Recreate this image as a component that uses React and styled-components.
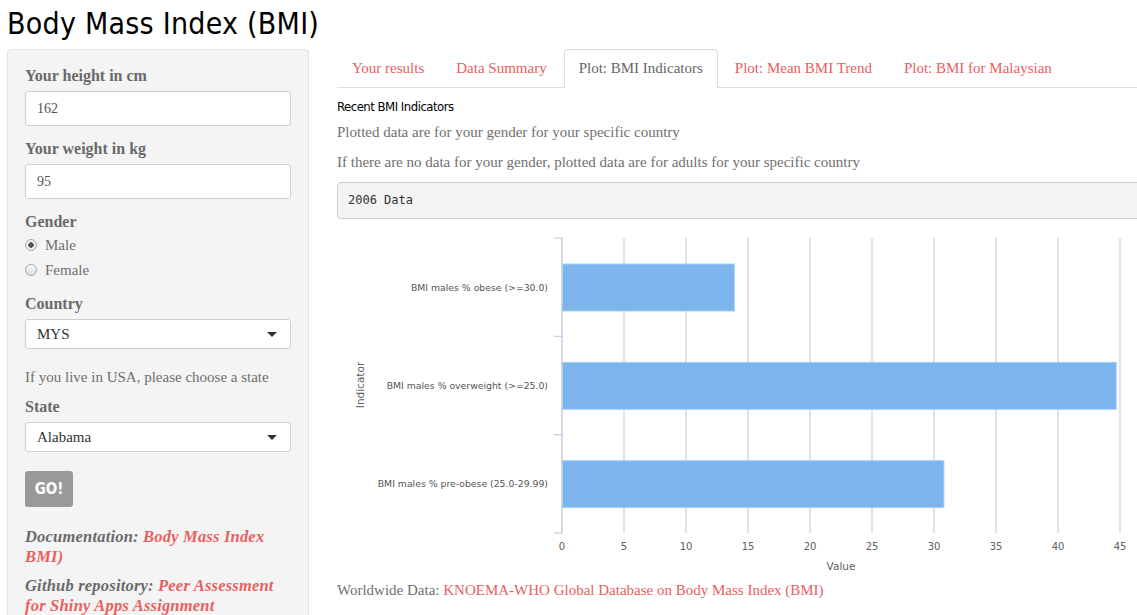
import React from "react";
import styled, { createGlobalStyle } from "styled-components";

const GlobalStyle = createGlobalStyle`
  html, body {
    margin: 0;
    padding: 0;
    background: #fff;
    overflow: hidden;
  }
  body {
    font-family: "Liberation Serif", Georgia, serif;
    font-size: 15px;
    color: #6f6f6f;
  }
`;

const narrow = `"DejaVu Sans Condensed", "DejaVu Sans", sans-serif`;

const Page = styled.div`
  width: 1137px;
  height: 615px;
  overflow: hidden;
  padding-left: 7px;
  box-sizing: border-box;
`;

const Title = styled.h1`
  margin: 0;
  height: 49px;
  padding-top: 4px;
  box-sizing: border-box;
  font-family: ${narrow};
  font-stretch: condensed;
  font-weight: 400;
  font-size: 30px;
  line-height: 40px;
  color: #000;
  letter-spacing: 0.25px;
`;

const Row = styled.div`
  display: flex;
  gap: 28px;
  align-items: flex-start;
`;

const Sidebar = styled.div`
  width: 302px;
  flex: none;
  box-sizing: border-box;
  background: #f4f4f4;
  border: 1px solid #e3e3e3;
  border-radius: 4px;
  padding: 16px 17px 20px;
  min-height: 580px;
`;

const Group = styled.div`
  margin-bottom: ${(p) => p.$mb ?? 13}px;
`;

const Label = styled.div`
  font-weight: 700;
  font-size: 16px;
  line-height: 20px;
  margin-bottom: ${(p) => p.$mb ?? 5}px;
  color: #6a6a6a;
`;

const TextInput = styled.div`
  height: 35px;
  box-sizing: border-box;
  background: #fff;
  border: 1px solid #cfcfcf;
  border-radius: 3px;
  padding: 0 11px;
  display: flex;
  align-items: center;
  font-size: 14px;
  color: #555;
`;

const Select = styled.div`
  height: 30px;
  box-sizing: border-box;
  background: #fff;
  border: 1px solid #cfcfcf;
  border-radius: 3px;
  padding: 0 11px;
  display: flex;
  align-items: center;
  justify-content: space-between;
  color: #333;
  font-size: 15px;
  &::after {
    content: "";
    border-top: 5px solid #333;
    border-left: 5px solid transparent;
    border-right: 5px solid transparent;
    margin-right: 2px;
  }
`;

const RadioRow = styled.div`
  display: flex;
  align-items: center;
  gap: 8px;
  line-height: 20px;
  margin-top: ${(p) => p.$mt ?? 0}px;
`;

const RadioDot = styled.span`
  width: 10px;
  height: 10px;
  border-radius: 50%;
  border: 1px solid #a9a9a9;
  background: ${(p) => (p.$on ? "radial-gradient(circle, #555 0 2.5px, #eee 3px)" : "linear-gradient(#fafafa, #ddd)")};
  flex: none;
`;

const HelpText = styled.div`
  line-height: 20px;
  margin-bottom: 10px;
`;

const GoButton = styled.button`
  display: block;
  width: 48px;
  height: 36px;
  border: none;
  border-radius: 3px;
  background: #999;
  color: #fff;
  font-family: ${narrow};
  font-stretch: condensed;
  font-weight: 700;
  font-size: 15px;
  margin: 19px 0 20px;
  padding: 0;
`;

const Note = styled.p`
  margin: 0 0 9px;
  font-style: italic;
  font-weight: 700;
  font-size: 16.5px;
  letter-spacing: 0.2px;
  line-height: 20px;
  color: #6a6a6a;
`;

const Link = styled.a`
  color: #e8605f;
  text-decoration: none;
`;

const Main = styled.div`
  width: 800px;
  flex: none;
  overflow: hidden;
`;

const Tabs = styled.div`
  display: flex;
  gap: 2px;
  border-bottom: 1px solid #ddd;
  height: 39px;
  box-sizing: border-box;
`;

const Tab = styled.div`
  padding: 0 14px;
  line-height: 37px;
  height: 39px;
  box-sizing: border-box;
  color: ${(p) => (p.$active ? "#666" : "#e8605f")};
  background: ${(p) => (p.$active ? "#fff" : "transparent")};
  border: 1px solid ${(p) => (p.$active ? "#ddd" : "transparent")};
  border-bottom-color: ${(p) => (p.$active ? "#fff" : "transparent")};
  border-radius: 4px 4px 0 0;
  white-space: nowrap;
`;

const Heading = styled.div`
  font-family: ${narrow};
  font-stretch: condensed;
  color: #000;
  font-size: 13px;
  letter-spacing: -0.5px;
  line-height: 20px;
  margin-top: 9px;
`;

const Para = styled.p`
  margin: ${(p) => p.$mt ?? 10}px 0 0;
  line-height: 20px;
  white-space: nowrap;
`;

const Pre = styled.pre`
  margin: 10px 0 0;
  width: 820px;
  height: 37px;
  box-sizing: border-box;
  background: #f4f4f4;
  border: 1px solid #ccc;
  border-radius: 4px;
  padding: 0 10px;
  line-height: 35px;
  font-family: "DejaVu Sans Mono", "Liberation Mono", monospace;
  font-size: 12px;
  color: #333;
`;

const ChartBox = styled.div`
  margin-top: 9px;
  height: 352px;
`;

const bars = [
  { label: "BMI males % obese (>=30.0)", value: 13.9 },
  { label: "BMI males % overweight (>=25.0)", value: 44.7 },
  { label: "BMI males % pre-obese (25.0-29.99)", value: 30.8 },
];

const Chart = () => {
  const x0 = 225;
  const scale = 12.4;
  const top = 10;
  const bottom = 305;
  const band = (bottom - top) / bars.length;
  const ticks = [0, 5, 10, 15, 20, 25, 30, 35, 40, 45];
  const font = "'DejaVu Sans', Verdana, sans-serif";
  return (
    <svg width="800" height="352" viewBox="0 0 800 352">
      {ticks.slice(1).map((t) => (
        <line key={t} x1={x0 + t * scale} x2={x0 + t * scale} y1={top} y2={bottom} stroke="#d8d8d8" strokeWidth="1.5" />
      ))}
      {bars.map((b, i) => {
        const y = top + band * i + 26;
        return (
          <g key={b.label}>
            <rect x={x0} y={y} width={b.value * scale} height={47} fill="#7cb5ec" stroke="#a9d0f5" strokeWidth="1" />
            <text x={211} y={top + band * i + band / 2 + 3.5} textAnchor="end" fontFamily={font} fontSize="9.3" fill="#555">
              {b.label}
            </text>
          </g>
        );
      })}
      <line x1={x0} x2={x0} y1={top} y2={bottom} stroke="#c0d0e0" strokeWidth="1.5" />
      {[0, 1, 2, 3].map((i) => (
        <line key={i} x1={217} x2={x0} y1={top + band * i} y2={top + band * i} stroke="#c0d0e0" strokeWidth="1.2" />
      ))}
      {ticks.map((t) => (
        <text key={t} x={x0 + t * scale} y={322} textAnchor="middle" fontFamily={font} fontSize="10" fill="#606060">
          {t}
        </text>
      ))}
      <text x={504} y={342} textAnchor="middle" fontFamily={font} fontSize="10.5" fill="#606060">
        Value
      </text>
      <text x={0} y={0} transform="translate(27 157) rotate(-90)" textAnchor="middle" fontFamily={font} fontSize="10.5" fill="#606060">
        Indicator
      </text>
    </svg>
  );
};

export default function App() {
  return (
    <Page>
      <GlobalStyle />
      <Title>Body Mass Index (BMI)</Title>
      <Row>
        <Sidebar>
          <Group>
            <Label>Your height in cm</Label>
            <TextInput>162</TextInput>
          </Group>
          <Group>
            <Label>Your weight in kg</Label>
            <TextInput>95</TextInput>
          </Group>
          <Group $mb={14}>
            <Label $mb={3}>Gender</Label>
            <RadioRow>
              <RadioDot $on />
              Male
            </RadioRow>
            <RadioRow $mt={5}>
              <RadioDot />
              Female
            </RadioRow>
          </Group>
          <Group $mb={18}>
            <Label>Country</Label>
            <Select>MYS</Select>
          </Group>
          <HelpText>If you live in USA, please choose a state</HelpText>
          <Group $mb={0}>
            <Label>State</Label>
            <Select>Alabama</Select>
          </Group>
          <GoButton>GO!</GoButton>
          <Note>
            Documentation: <Link>Body Mass Index BMI)</Link>
          </Note>
          <Note>
            Github repository: <Link>Peer Assessment for Shiny Apps Assignment</Link>
          </Note>
        </Sidebar>
        <Main>
          <Tabs>
            <Tab>Your results</Tab>
            <Tab>Data Summary</Tab>
            <Tab $active>Plot: BMI Indicators</Tab>
            <Tab>Plot: Mean BMI Trend</Tab>
            <Tab>Plot: BMI for Malaysian</Tab>
          </Tabs>
          <Heading>Recent BMI Indicators</Heading>
          <Para $mt={5}>Plotted data are for your gender for your specific country</Para>
          <Para>If there are no data for your gender, plotted data are for adults for your specific country</Para>
          <Pre>2006 Data</Pre>
          <ChartBox>
            <Chart />
          </ChartBox>
          <Para $mt={0}>
            Worldwide Data: <Link>KNOEMA-WHO Global Database on Body Mass Index (BMI)</Link>
          </Para>
        </Main>
      </Row>
    </Page>
  );
}
